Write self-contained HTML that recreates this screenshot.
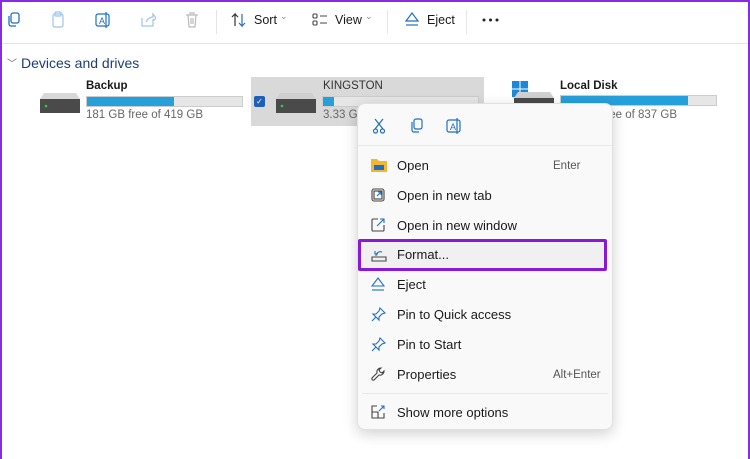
<!DOCTYPE html>
<html><head><meta charset="utf-8"><style>
*{box-sizing:border-box;margin:0;padding:0}
body{width:750px;height:459px;overflow:hidden;background:#fff;font-family:"Liberation Sans",sans-serif;position:relative;color:#1a1a1a}
.frame{position:absolute;inset:0;border:2px solid #8a2be2;border-bottom:none;pointer-events:none}
.tb{position:absolute;top:0;left:0;width:750px;height:44px;border-bottom:1px solid #e5e5e5}
.a{position:absolute;font-size:12.5px}
.bar{position:absolute;height:11px;background:#e6e6e6;border:1px solid #ccc}
.bar i{display:block;height:100%;background:#26a0da}
.drv{position:absolute;width:40px;height:20px}
.menu{position:absolute;left:357px;top:103px;width:256px;height:327px;background:#f9f9f9;border:1px solid #e0e0e0;border-radius:8px;box-shadow:0 4px 14px rgba(0,0,0,.18)}
.it{position:absolute;left:39px;font-size:13px;color:#1a1a1a}
.sc{position:absolute;font-size:11.5px;color:#555}
.ic{position:absolute;left:13px}
</style></head><body>
<div class="tb">
<svg style="position:absolute;left:6px;top:12px" width="14" height="16" viewBox="0 0 14 16" fill="none" stroke="#1f6fc5" stroke-width="1.3"><rect x="5" y="1" width="8" height="10" rx="2"/><path d="M3 4v8a2 2 0 002 2h5"/></svg>
<svg style="position:absolute;left:51px;top:11px" width="14" height="18" fill="none" stroke="#9cc6ea" stroke-width="1.2"><rect x="2" y="3" width="10" height="13" rx="2"/><rect x="4" y="1" width="6" height="4" rx="1"/></svg>
<svg style="position:absolute;left:94px;top:11px" width="18" height="18" fill="none" stroke="#1f6fc5" stroke-width="1.2"><rect x="2" y="3" width="13" height="12" rx="2"/><text x="5" y="13" font-size="9" fill="#1f6fc5" stroke="none" font-family="Liberation Sans">A</text><path d="M12 1v16"/></svg>
<svg style="position:absolute;left:140px;top:12px" width="16" height="16" fill="none" stroke="#9cc6ea" stroke-width="1.2"><path d="M2 6v8h11v-4M6 10c1-3 4-5 7-5V2l3 4-3 3V7"/></svg>
<svg style="position:absolute;left:185px;top:11px" width="14" height="18" fill="none" stroke="#bbb" stroke-width="1.2"><path d="M1 4h12M5 4V2h4v2M3 4l1 12h6l1-12M6 7v6M8 7v6"/></svg>
<div style="position:absolute;left:216px;top:10px;width:1px;height:24px;background:#e5e5e5"></div>
<svg style="position:absolute;left:231px;top:12px" width="16" height="16" fill="none" stroke="#333" stroke-width="1.2"><path d="M4 14V2L1 5M4 2l3 3"/><path d="M11 2v12l-3-3M11 14l3-3" stroke="#1f6fc5"/></svg>
<div class="a" style="left:254px;top:13px">Sort</div><div class="a" style="left:280px;top:11px;font-size:9px;color:#888">⌄</div>
<svg style="position:absolute;left:312px;top:13px" width="16" height="14" fill="none" stroke="#444" stroke-width="1.1"><rect x="1" y="1" width="4" height="4" rx="1"/><rect x="1" y="8" width="4" height="4" rx="1"/><path d="M8 3h7M8 10h7"/></svg>
<div class="a" style="left:335px;top:13px">View</div><div class="a" style="left:365px;top:11px;font-size:9px;color:#888">⌄</div>
<div style="position:absolute;left:387px;top:10px;width:1px;height:24px;background:#e5e5e5"></div>
<svg style="position:absolute;left:404px;top:11px" width="16" height="16" fill="none" stroke="#1f6fc5" stroke-width="1.2"><path d="M8 2l6 8H2z"/><path d="M2 14h12"/></svg>
<div class="a" style="left:427px;top:13px">Eject</div>
<div style="position:absolute;left:466px;top:10px;width:1px;height:24px;background:#e5e5e5"></div>
<svg style="position:absolute;left:482px;top:18px" width="18" height="4"><circle cx="2" cy="2" r="1.5" fill="#222"/><circle cx="8.5" cy="2" r="1.5" fill="#222"/><circle cx="15" cy="2" r="1.5" fill="#222"/></svg>
</div>
<div style="position:absolute;left:7px;top:55px;font-size:10px;color:#666">﹀</div>
<div style="position:absolute;left:21px;top:55px;font-size:14px;color:#1b3e7a">Devices and drives</div>

<svg class="drv" style="left:40px;top:93px" viewBox="0 0 40 20"><path d="M4 0h32l4 6H0z" fill="#d8d8d8"/><rect y="6" width="40" height="14" fill="#4a4a4a"/><circle cx="6" cy="13" r="1.3" fill="#3c3"/></svg>
<div class="a" style="left:86px;top:80px;font-size:11.5px;font-weight:bold">Backup</div>
<div class="bar" style="left:86px;top:96px;width:157px"><i style="width:56%"></i></div>
<div class="a" style="left:86px;top:109px;font-size:11.5px;color:#666">181 GB free of 419 GB</div>

<div style="position:absolute;left:251px;top:77px;width:233px;height:49px;background:#d9d9d9"></div>
<div style="position:absolute;left:254px;top:96px;width:11px;height:11px;background:#1f5fb5;border-radius:2px;color:#fff;font-size:8px;text-align:center;line-height:11px">✓</div>
<svg class="drv" style="left:276px;top:93px" viewBox="0 0 40 20"><path d="M4 0h32l4 6H0z" fill="#cfcfcf"/><rect y="6" width="40" height="14" fill="#4a4a4a"/><circle cx="6" cy="13" r="1.3" fill="#3c3"/></svg>
<div class="a" style="left:323px;top:80px;font-size:11.5px;color:#333">KINGSTON</div>
<div class="bar" style="left:322px;top:96px;width:157px"><i style="width:7%"></i></div>
<div class="a" style="left:323px;top:109px;font-size:11.5px;color:#666">3.33 GB</div>

<svg style="position:absolute;left:512px;top:81px" width="16" height="16"><rect width="7.5" height="7.5" fill="#1e88d8"/><rect x="8.5" width="7.5" height="7.5" fill="#1e88d8"/><rect y="8.5" width="7.5" height="7.5" fill="#1e88d8"/><rect x="8.5" y="8.5" width="7.5" height="7.5" fill="#1e88d8"/></svg>
<svg class="drv" style="left:514px;top:92px" viewBox="0 0 40 20"><path d="M4 0h32l4 6H0z" fill="#d0d0d0"/><rect y="6" width="40" height="14" fill="#4a4a4a"/></svg>
<div class="a" style="left:560px;top:80px;font-size:11.5px;font-weight:bold">Local Disk</div>
<div class="bar" style="left:560px;top:95px;width:157px"><i style="width:82%"></i></div>
<div class="a" style="left:560px;top:109px;font-size:11.5px;color:#666">158 GB free of 837 GB</div>

<div class="menu">
<svg style="position:absolute;left:14px;top:14px" width="14" height="16" fill="none" stroke="#1f6fc5" stroke-width="1.2"><path d="M3 1l8 10M11 1L3 11"/><circle cx="3.5" cy="13" r="2"/><circle cx="10.5" cy="13" r="2"/></svg>
<svg style="position:absolute;left:51px;top:14px" width="16" height="16" fill="none" stroke="#1f6fc5" stroke-width="1.2"><rect x="5" y="1" width="8" height="10" rx="2"/><path d="M3 4v8a2 2 0 002 2h5"/></svg>
<svg style="position:absolute;left:87px;top:13px" width="18" height="18" fill="none" stroke="#1f6fc5" stroke-width="1.2"><rect x="2" y="3" width="13" height="12" rx="2"/><text x="5" y="13" font-size="9" fill="#1f6fc5" stroke="none" font-family="Liberation Sans">A</text><path d="M12 1v16"/></svg>
<div style="position:absolute;left:0;top:41px;width:254px;height:1px;background:#e8e8e8"></div>
<svg class="ic" style="top:54px" width="16" height="14"><path d="M0 1h6l2 2h8v11H0z" fill="#f3b633"/><rect x="3" y="7" width="10" height="5" fill="#1f6fc5"/></svg>
<div class="it" style="top:54px">Open</div><div class="sc" style="left:195px;top:56px">Enter</div>
<svg class="ic" style="top:84px" width="14" height="14" fill="none" stroke="#444" stroke-width="1.1"><rect x="1" y="1" width="12" height="12" rx="2"/><rect x="3" y="3" width="8" height="8"/><path d="M6 8l4-4M7 4h3v3" stroke="#1f6fc5"/></svg>
<div class="it" style="top:84px">Open in new tab</div>
<svg class="ic" style="top:114px" width="14" height="14" fill="none" stroke="#444" stroke-width="1.1"><path d="M7 1H2a1 1 0 00-1 1v10a1 1 0 001 1h10a1 1 0 001-1V7"/><path d="M6 8l7-7M9 1h4v4" stroke="#1f6fc5"/></svg>
<div class="it" style="top:114px">Open in new window</div>
<div style="position:absolute;left:0;top:135px;width:249px;height:32px;border:3px solid #8a18d6;background:#f0f0f0;border-radius:2px"></div>
<svg class="ic" style="top:144px" width="16" height="14" fill="none" stroke="#444" stroke-width="1.1"><path d="M1 9h14v4H1z" rx="1"/><path d="M5 8c0-3 3-5 6-4M4 3v3h3" stroke="#1f6fc5"/></svg>
<div class="it" style="top:143px">Format...</div>
<svg class="ic" style="top:173px" width="14" height="14" fill="none" stroke="#1f6fc5" stroke-width="1.1"><path d="M7 1l6 8H1z"/><path d="M1 13h12"/></svg>
<div class="it" style="top:173px">Eject</div>
<svg class="ic" style="top:203px" width="15" height="15" fill="none" stroke="#1f6fc5" stroke-width="1.1"><path d="M9 1l5 5-3 1-3 3 0 3-6-6 3 0 3-3zM5 10l-4 4"/></svg>
<div class="it" style="top:203px">Pin to Quick access</div>
<svg class="ic" style="top:233px" width="15" height="15" fill="none" stroke="#1f6fc5" stroke-width="1.1"><path d="M9 1l5 5-3 1-3 3 0 3-6-6 3 0 3-3zM5 10l-4 4"/></svg>
<div class="it" style="top:233px">Pin to Start</div>
<svg class="ic" style="top:263px" width="15" height="15" fill="none" stroke="#444" stroke-width="1.1"><path d="M10 1a4 4 0 00-4 5L1 11a1.5 1.5 0 002 2l5-5a4 4 0 005-4l-2 2-2-1-1-2z"/></svg>
<div class="it" style="top:263px">Properties</div><div class="sc" style="left:195px;top:265px">Alt+Enter</div>
<div style="position:absolute;left:4px;top:289px;width:246px;height:1px;background:#e8e8e8"></div>
<svg class="ic" style="top:301px" width="14" height="14" fill="none" stroke="#444" stroke-width="1.1"><path d="M6 1H1v12h12V8M1 7h6v6"/><path d="M8 6l5-5M10 1h3v3" stroke="#1f6fc5"/></svg>
<div class="it" style="top:301px">Show more options</div>
</div>
<div class="frame"></div>
</body></html>
